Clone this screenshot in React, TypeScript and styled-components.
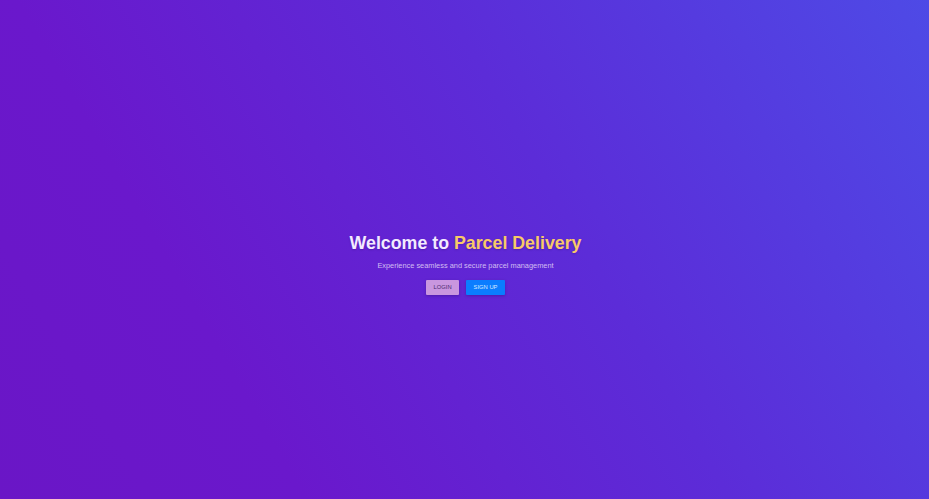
import React from "react";
import styled, { createGlobalStyle } from "styled-components";

const GlobalStyle = createGlobalStyle`
  html, body {
    margin: 0;
    padding: 0;
    height: 100%;
  }
  #root {
    height: 100%;
  }
`;

const Page = styled.main`
  box-sizing: border-box;
  width: 100%;
  height: 100vh;
  display: flex;
  align-items: center;
  justify-content: center;
  padding: 29px 0 0 2px;
  background: linear-gradient(60deg, #6a16c6 0%, #6a18cc 25%, #5c2cd8 60%, #4e4ae6 100%);
  font-family: "Liberation Sans", Arial, sans-serif;
`;

const Hero = styled.section`
  display: flex;
  flex-direction: column;
  align-items: center;
  text-align: center;
`;

const Title = styled.h1`
  margin: 0;
  font-size: 17.8px;
  font-weight: 700;
  line-height: 20.7px;
  color: #f3eaff;
  text-shadow: 0 1px 2px rgba(40, 0, 90, 0.25);
`;

const Accent = styled.span`
  color: #f8c968;
`;

const Subtitle = styled.p`
  margin: 8.5px 0 0;
  font-size: 7.4px;
  line-height: 8.5px;
  color: #d2bdf2;
`;

const Actions = styled.div`
  display: flex;
  gap: 7px;
  margin-top: 9.7px;
`;

const Button = styled.button<{ $variant: "login" | "signup" }>`
  box-sizing: border-box;
  height: 15px;
  padding: 0 7.5px;
  border: none;
  border-radius: 1px;
  font-family: "Liberation Sans", Arial, sans-serif;
  font-size: 5.8px;
  line-height: 15px;
  cursor: pointer;
  background: ${(p) => (p.$variant === "login" ? "#c996df" : "#0b7dff")};
  color: ${(p) => (p.$variant === "login" ? "#4b2a6e" : "#d6ebff")};
  box-shadow: 0 1px 3px rgba(30, 0, 80, 0.3);
`;

export default function App() {
  return (
    <>
      <GlobalStyle />
      <Page>
        <Hero>
          <Title>
            Welcome to <Accent>Parcel Delivery</Accent>
          </Title>
          <Subtitle>Experience seamless and secure parcel management</Subtitle>
          <Actions>
            <Button $variant="login">LOGIN</Button>
            <Button $variant="signup">SIGN UP</Button>
          </Actions>
        </Hero>
      </Page>
    </>
  );
}
